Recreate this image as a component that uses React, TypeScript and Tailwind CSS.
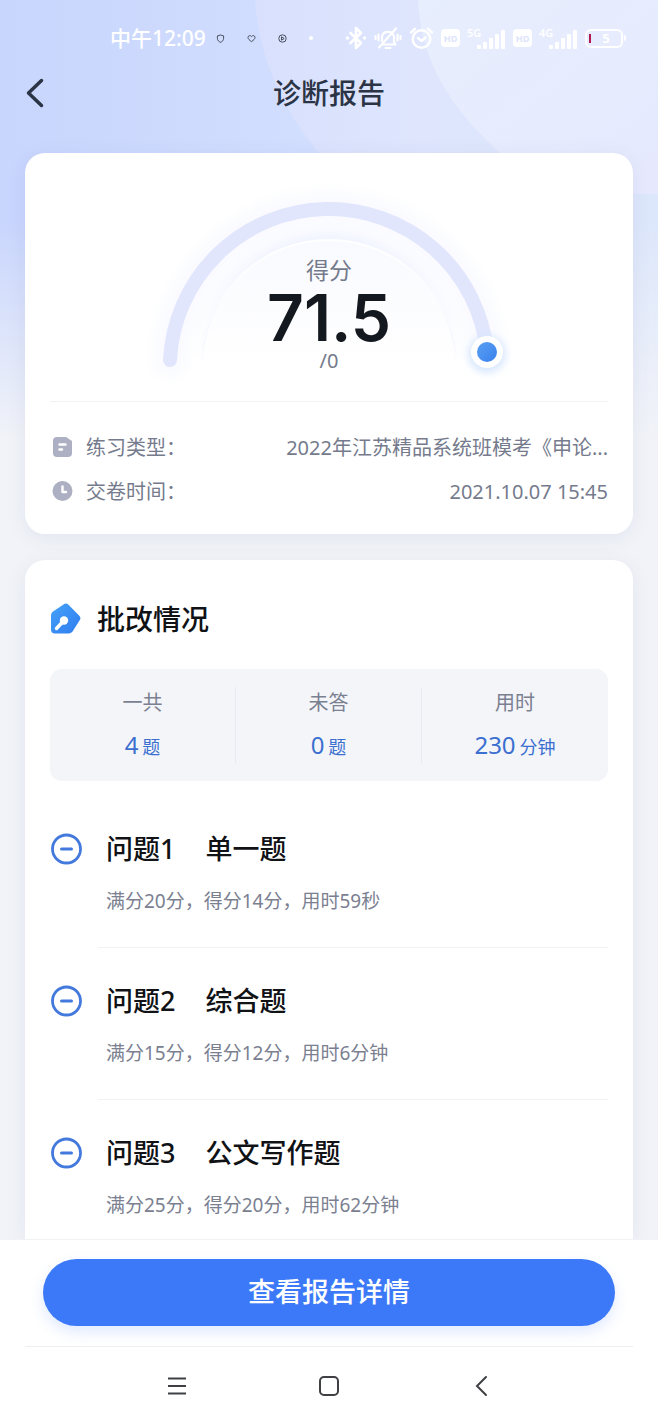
import type { ReactNode } from 'react';

type Question = {
  id: number;
  title: string;
  detail: string;
};

const stats = [
  { label: '一共', value: '4', unit: '题' },
  { label: '未答', value: '0', unit: '题' },
  { label: '用时', value: '230', unit: '分钟' },
];

const questions: Question[] = [
  { id: 1, title: '单一题', detail: '满分20分，得分14分，用时59秒' },
  { id: 2, title: '综合题', detail: '满分15分，得分12分，用时6分钟' },
  { id: 3, title: '公文写作题', detail: '满分25分，得分20分，用时62分钟' },
];

function HdBadge() {
  return (
    <span className="flex h-[18px] w-[19px] items-center justify-center rounded-[4px] bg-white text-[9px] leading-none font-bold text-[#dde4fb]">
      HD
    </span>
  );
}

function Signal({ label }: { label: string }) {
  return (
    <span className="relative block h-[22px] w-[39px]">
      <span className="absolute top-0 left-0 text-[11px] leading-none font-semibold">{label}</span>
      <svg className="absolute right-0 bottom-0" width="30" height="19" viewBox="0 0 30 19" fill="currentColor" aria-hidden="true">
        <rect x="1" y="15" width="4" height="4" rx="1" />
        <rect x="7" y="12" width="4" height="7" rx="1" />
        <rect x="13" y="8" width="4" height="11" rx="1" />
        <rect x="19" y="4" width="4" height="15" rx="1" />
        <rect x="25" y="0" width="4" height="19" rx="1" />
      </svg>
    </span>
  );
}

function StatusBar() {
  return (
    <div className="flex h-[76px] items-center justify-between pr-8 pl-[110px] text-white">
      <div className="flex items-center">
        <span className="text-[21px] leading-7 font-medium">中午12:09</span>
        <div className="ml-[10px] flex items-center gap-[22px] text-[#39404d]">
          <svg width="9" height="9" viewBox="0 0 9 9" fill="none" stroke="currentColor" strokeWidth="0.9" aria-hidden="true">
            <path d="M4.5 1 1.4 1.9v2.4c0 2 1.2 3.3 3.1 4 1.9-.7 3.1-2 3.1-4V1.9z" />
          </svg>
          <svg width="9" height="9" viewBox="0 0 9 9" fill="none" stroke="currentColor" strokeWidth="0.9" aria-hidden="true">
            <path d="M4.5 7.6C2.5 6.2 1 5 1 3.4c0-1.9 2.5-2.5 3.5-.8 1-1.7 3.5-1.1 3.5.8 0 1.6-1.5 2.8-3.5 4.2z" />
          </svg>
          <svg width="9" height="9" viewBox="0 0 9 9" fill="none" stroke="currentColor" strokeWidth="0.9" aria-hidden="true">
            <circle cx="4.5" cy="4.5" r="3.7" />
            <path d="M3.5 2.8v3.4l2.7-1.7z" />
          </svg>
          <span className="size-1 rounded-full bg-white" />
        </div>
      </div>

      <div className="flex items-center gap-[7px]">
        <svg width="22" height="24" viewBox="0 0 22 24" fill="none" stroke="currentColor" strokeWidth="2.6" strokeLinejoin="round" strokeLinecap="round" aria-hidden="true">
          <path d="M5.5 7 16 17l-5 5V2l5 5L5.5 17" />
          <path d="M2.5 12h.01M19.5 12h.01" strokeWidth="3.5" />
        </svg>
        <svg width="28" height="24" viewBox="0 0 28 24" fill="none" stroke="currentColor" strokeWidth="2.2" strokeLinecap="round" strokeLinejoin="round" aria-hidden="true">
          <path d="M8 18.5h13.5L20 16v-5.5a6.2 6.2 0 0 0-12 0V15" />
          <path d="m5 21.5 17-19M11.5 22h5" />
          <path d="M4.5 8.5v6M1.5 10v3M23.5 8.5v6M26.5 10v3" />
        </svg>
        <svg width="25" height="24" viewBox="0 0 25 24" fill="none" stroke="currentColor" strokeWidth="2.4" strokeLinecap="round" strokeLinejoin="round" aria-hidden="true">
          <circle cx="12.5" cy="13" r="8.8" />
          <path d="m9 12 3.5 3 4-3.5" />
          <path d="M2 6.5 6 2.8M23 6.5l-4-3.7" />
        </svg>
        <HdBadge />
        <Signal label="5G" />
        <HdBadge />
        <Signal label="4G" />
        <div className="flex items-center">
          <div className="flex h-[19px] w-[38px] items-center rounded-[6px] border-2 border-white pl-[2px]">
            <span className="h-[9px] w-[2px] bg-[#b0194f]" />
            <span className="flex-1 text-center text-[13px] leading-none font-bold">5</span>
          </div>
          <span className="ml-px h-[6px] w-[2px] rounded-r-sm bg-white" />
        </div>
      </div>
    </div>
  );
}

/* 顶部装饰背景 */
function Backdrop() {
  return (
    <div className="absolute inset-x-0 top-0 h-[440px] overflow-hidden bg-linear-to-r from-[#c8d5fd] via-[#d2dffe] to-[#dfe7fb]">
      <svg className="absolute top-0 right-0 h-full w-[403px]" viewBox="0 0 403 440" preserveAspectRatio="none" aria-hidden="true">
        <defs>
          <linearGradient id="sheet" x1="0" y1="0" x2="1" y2="0">
            <stop offset="0" stopColor="#d9e0fd" />
            <stop offset="0.4" stopColor="#dee5fd" />
            <stop offset="1" stopColor="#dde7fb" />
          </linearGradient>
          <linearGradient id="sheetLight" x1="0" y1="0" x2="1" y2="1">
            <stop offset="0" stopColor="#e7eefd" />
            <stop offset="1" stopColor="#e6e9fe" />
          </linearGradient>
        </defs>
        <path d="M0 0c4 60 30 115 70 160 60 66 150 130 333 200V0z" fill="url(#sheet)" />
        <path d="M163 0c3 60 30 108 88 158 26 22 60 32 92 36h60V0z" fill="url(#sheetLight)" />
      </svg>
      <div className="absolute inset-x-0 bottom-0 h-[220px] bg-linear-to-b from-[#f1f3f8]/0 to-[#f1f3f8]" />
    </div>
  );
}

function ScoreGauge() {
  return (
    <div className="relative mx-auto h-[216px] w-[400px]">
      <svg className="absolute inset-0 overflow-visible" width="400" height="216" viewBox="0 0 400 216" aria-hidden="true">
        <defs>
          <linearGradient id="disc" x1="0" y1="0" x2="0" y2="1">
            <stop offset="0" stopColor="#f9faff" />
            <stop offset="1" stopColor="#ffffff" />
          </linearGradient>
          <linearGradient id="halo" gradientUnits="userSpaceOnUse" x1="0" y1="60" x2="0" y2="215">
            <stop offset="0" stopColor="#ebeffe" />
            <stop offset="1" stopColor="#ebeffe" stopOpacity="0" />
          </linearGradient>
          <linearGradient id="rim" gradientUnits="userSpaceOnUse" x1="0" y1="87" x2="0" y2="214">
            <stop offset="0" stopColor="#ffffff" />
            <stop offset="0.8" stopColor="#f8f9fe" />
            <stop offset="1" stopColor="#ffffff" />
          </linearGradient>
          <linearGradient id="knob" x1="0" y1="0" x2="1" y2="1">
            <stop offset="0" stopColor="#5a9ff2" />
            <stop offset="1" stopColor="#3a82ee" />
          </linearGradient>
          <filter id="soft" x="-30%" y="-30%" width="160%" height="160%">
            <feGaussianBlur stdDeviation="7" />
          </filter>
          <filter id="softKnob" x="-60%" y="-60%" width="220%" height="220%">
            <feGaussianBlur stdDeviation="4" />
          </filter>
        </defs>
        <path d="M41 207A159 159 0 0 1 358 199" fill="none" stroke="#fafbff" strokeWidth="36" strokeLinecap="round" filter="url(#soft)" />
        <path d="M66 214A134 134 0 0 1 334 214z" fill="url(#halo)" filter="url(#soft)" />
        <path d="M73 214A127 127 0 0 1 327 214" fill="url(#disc)" stroke="url(#rim)" strokeWidth="2" />
        <path d="M41 207A159 159 0 0 1 358 199" fill="none" stroke="#e1e6fc" strokeWidth="14" strokeLinecap="round" />
        <circle cx="358" cy="201" r="18" fill="#d3e4fd" filter="url(#softKnob)" />
        <circle cx="358" cy="199" r="16" fill="#ffffff" />
        <circle cx="358" cy="199" r="10" fill="url(#knob)" />
      </svg>
      <div className="relative flex flex-col items-center pt-[102px]">
        <span className="text-[23px] leading-[30px] text-[#747a8b]">得分</span>
        <span className="font-['Inter'] text-[64px] leading-[66px] font-semibold text-[#14181f]">71.5</span>
        <span className="text-[20px] leading-5 text-[#747a8b]">/0</span>
      </div>
    </div>
  );
}

function InfoRow({ icon, label, value }: { icon: ReactNode; label: string; value: string }) {
  return (
    <div className="flex items-center text-[20px] leading-7 text-[#757b8d]">
      {icon}
      <dt className="ml-3 shrink-0">{label}</dt>
      <dd className="min-w-0 flex-1 text-right whitespace-nowrap">{value}</dd>
    </div>
  );
}

function QuestionRow({ question, last }: { question: Question; last: boolean }) {
  return (
    <li className="flex gap-4">
      <button type="button" aria-label={`收起问题${question.id}`} className="mt-[37px] size-8 shrink-0 text-[#4379dc]">
        <svg width="32" height="32" viewBox="0 0 32 32" fill="none" stroke="currentColor" strokeWidth="3" strokeLinecap="round" aria-hidden="true">
          <circle cx="16.5" cy="16" r="14" strokeWidth="2.8" />
          <path d="M11.5 16h10" />
        </svg>
      </button>
      <div className={last ? 'flex-1 pt-[35px] pb-5 pl-2' : 'flex-1 border-b border-[#f1f2f5] pt-[35px] pb-8 pl-2'}>
        <h3 className="flex gap-[30px] text-[27px] leading-9 font-medium text-[#101216]">
          <span>问题{question.id}</span>
          <span>{question.title}</span>
        </h3>
        <p className="mt-5 text-[19px] leading-7 text-[#7b8091]">{question.detail}</p>
      </div>
    </li>
  );
}

export default function App() {
  return (
    <div className="relative flex min-h-screen flex-col bg-[#f1f3f8] font-['Noto_Sans','Noto_Sans_CJK_SC',sans-serif]">
      <Backdrop />

      <header className="relative">
        <StatusBar />
        <div className="relative flex h-[77px] justify-center">
          <button type="button" aria-label="返回" className="absolute top-0 left-6 flex h-[34px] w-6 items-center text-[#2b3445]">
            <svg width="22" height="30" viewBox="0 0 22 30" fill="none" stroke="currentColor" strokeWidth="3.5" strokeLinecap="round" strokeLinejoin="round" aria-hidden="true">
              <path d="M17.5 2.5 4.5 15l13 12.5" />
            </svg>
          </button>
          <h1 className="text-[28px] leading-[34px] font-medium text-[#2b3445]">诊断报告</h1>
        </div>
      </header>

      <main className="relative flex flex-1 flex-col gap-[26px] px-[25px]">
        {/* 得分卡片 */}
        <section className="rounded-[20px] bg-white px-[25px] pb-7 shadow-[0_4px_20px_rgba(60,80,130,0.08)]">
          <ScoreGauge />
          <dl className="mt-8 flex flex-col gap-4 border-t border-[#f1f2f5] pt-8">
            <InfoRow
              label="练习类型："
              value="2022年江苏精品系统班模考《申论..."
              icon={
                <svg width="24" height="24" viewBox="0 0 24 24" aria-hidden="true">
                  <path d="M7 1h9l6 4v12a4 4 0 0 1-4 4H7a4 4 0 0 1-4-4V5a4 4 0 0 1 4-4z" fill="#adb0c3" />
                  <path d="M9.5 8.500h6M9.500 13.500H12" stroke="#ffffff" strokeWidth="2.4" strokeLinecap="round" />
                </svg>
              }
            />
            <InfoRow
              label="交卷时间："
              value="2021.10.07 15:45"
              icon={
                <svg width="24" height="24" viewBox="0 0 24 24" aria-hidden="true">
                  <circle cx="12.5" cy="11" r="10" fill="#adb0c3" />
                  <path d="M12.5 6.500V12H16" fill="none" stroke="#ffffff" strokeWidth="2.4" strokeLinecap="round" strokeLinejoin="round" />
                </svg>
              }
            />
          </dl>
        </section>

        {/* 批改情况 */}
        <section className="flex-1 rounded-t-[20px] bg-white px-[25px] pt-10 shadow-[0_4px_20px_rgba(60,80,130,0.08)]">
          <div className="flex items-center gap-4">
            <svg width="31" height="32" viewBox="0 0 31 32" aria-hidden="true">
              <defs>
                <linearGradient id="pen" x1="0" y1="0" x2="1" y2="1">
                  <stop offset="0" stopColor="#46a2f8" />
                  <stop offset="1" stopColor="#2f7cf0" />
                </linearGradient>
              </defs>
              <path d="M13.5 1.5a4 4 0 0 1 5 .2l10.8 11a3.6 3.6 0 0 1 .5 4.4L23.5 27a6 6 0 0 1-5.2 3.5H5A4 4 0 0 1 1 26.5V12a4.5 4.5 0 0 1 2-3.600z" fill="url(#pen)" />
              <path d="m6.5 25.5 6-6.5" stroke="#ffffff" strokeWidth="3.4" strokeLinecap="round" />
              <circle cx="14" cy="17.5" r="4.2" fill="#ffffff" />
            </svg>
            <h2 className="text-[28px] leading-[38px] font-medium text-[#101216]">批改情况</h2>
          </div>

          <dl className="mt-[31px] grid h-[112px] grid-cols-3 items-center divide-x divide-[#e7eaf0] rounded-xl bg-[#f3f5f9]">
            {stats.map((stat) => (
              <div key={stat.label} className="flex flex-col items-center gap-3 pt-[2px] text-center">
                <dt className="text-[20px] leading-7 text-[#7b8091]">{stat.label}</dt>
                <dd className="flex items-baseline gap-1 leading-8 text-[#3b6fd0]">
                  <span className="text-[24px]">{stat.value}</span>
                  <span className="text-[18px]">{stat.unit}</span>
                </dd>
              </div>
            ))}
          </dl>

          <ul className="mt-[15px]">
            {questions.map((question, index) => (
              <QuestionRow key={question.id} question={question} last={index === questions.length - 1} />
            ))}
          </ul>
        </section>
      </main>

      <footer className="relative border-t border-[#f1f2f5] bg-white">
        <div className="mx-[25px] border-b border-[#eeeff1] px-[18px] pt-[19px] pb-5">
          <button
            type="button"
            className="h-[67px] w-full rounded-full bg-[#3c79f8] text-[27px] font-medium text-white shadow-[0_6px_14px_rgba(60,121,248,0.16)]"
          >
            查看报告详情
          </button>
        </div>
        {/* 系统导航键 */}
        <nav className="flex h-[78px] items-center justify-center gap-32 text-[#3f4043]">
          <button type="button" aria-label="菜单">
            <svg width="24" height="24" viewBox="0 0 24 24" fill="none" stroke="currentColor" strokeWidth="2" aria-hidden="true">
              <path d="M3 4.5h18M3 12h18M3 19.5h18" />
            </svg>
          </button>
          <button type="button" aria-label="主屏幕">
            <svg width="24" height="24" viewBox="0 0 24 24" fill="none" stroke="currentColor" strokeWidth="2" aria-hidden="true">
              <rect x="3" y="3" width="18" height="18" rx="4" />
            </svg>
          </button>
          <button type="button" aria-label="后退">
            <svg width="24" height="24" viewBox="0 0 24 24" fill="none" stroke="currentColor" strokeWidth="2" strokeLinecap="round" aria-hidden="true">
              <path d="M17 3 8 12l9 9" />
            </svg>
          </button>
        </nav>
      </footer>
    </div>
  );
}
